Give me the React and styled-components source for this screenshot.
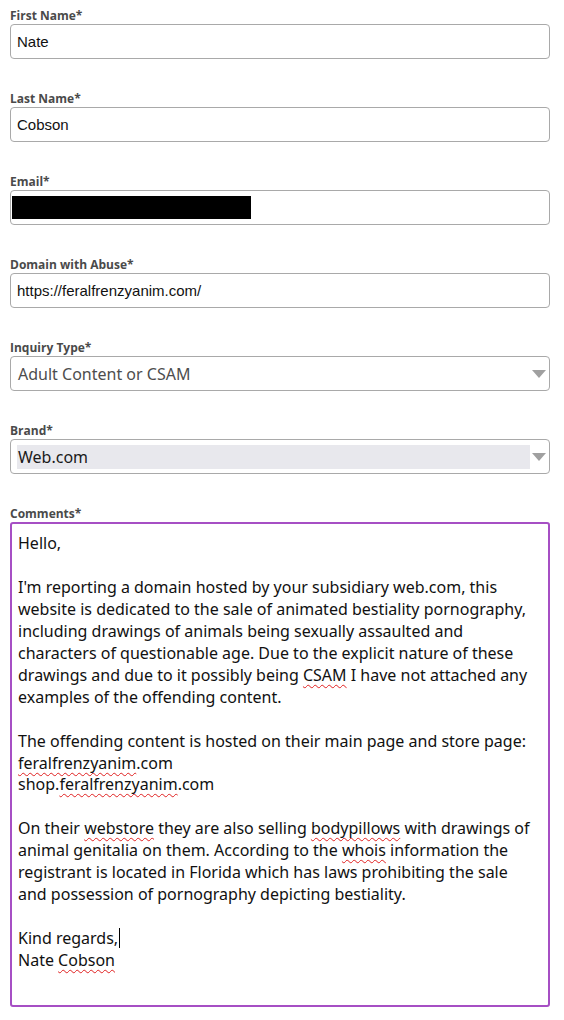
import React from "react";
import styled, { createGlobalStyle } from "styled-components";

const GlobalStyle = createGlobalStyle`
  html, body {
    margin: 0;
    padding: 0;
    background: #fff;
  }
`;

const Form = styled.form`
  padding: 7px 14px 0 10px;
  display: flex;
  flex-direction: column;
  gap: 31px;
  font-family: "Open Sans", "Noto Sans", sans-serif;
`;

const Field = styled.div`
  display: flex;
  flex-direction: column;
`;

const Label = styled.label`
  display: block;
  font-size: 12px;
  font-weight: 700;
  line-height: 16px;
  padding-top: 1px;
  color: #4a4a4a;
`;

const TextBox = styled.div`
  box-sizing: border-box;
  height: 35px;
  border: 1px solid #a9a9a9;
  border-radius: 4px;
  display: flex;
  align-items: center;
  padding: 0 6px;
  font-family: "Liberation Sans", Arial, sans-serif;
  font-size: 15px;
  color: #111;
`;

const Redacted = styled.span`
  display: block;
  width: 239px;
  height: 23px;
  margin-left: -5px;
  background: #000;
`;

const SelectBox = styled.div`
  box-sizing: border-box;
  height: 35px;
  border: 1px solid #a9a9a9;
  border-radius: 4px;
  display: flex;
  align-items: center;
  padding: 0 3px 0 6px;
  gap: 2px;
`;

const SelectValue = styled.span`
  flex: 1;
  display: flex;
  align-items: center;
  height: 24px;
  padding-left: 1px;
  font-family: "Noto Sans", "Open Sans", sans-serif;
  font-size: 16px;
  color: ${(p) => (p.$selected ? "#1a1a1a" : "#4d4d4d")};
  background: ${(p) => (p.$selected ? "#e8e8ed" : "transparent")};
`;

const Arrow = styled.span`
  width: 0;
  height: 0;
  border-left: 7.5px solid transparent;
  border-right: 7.5px solid transparent;
  border-top: 8px solid #a0a0a0;
  margin-top: 1px;
`;

const Comments = styled.div`
  box-sizing: border-box;
  height: 485px;
  border: 2px solid #a64fc4;
  border-radius: 3px;
  padding: 9px 6px 0 6px;
  font-family: "Noto Sans", "Open Sans", sans-serif;
  font-size: 16px;
  line-height: 21.95px;
  color: #111;
`;

const Line = styled.div`
  min-height: 21.95px;
  white-space: pre;
`;

const Typo = styled.span`
  text-decoration: underline wavy #e02020;
  text-decoration-thickness: 1px;
  text-underline-offset: 3px;
  text-decoration-skip-ink: none;
`;

const Caret = styled.span`
  display: inline-block;
  width: 1px;
  height: 20px;
  background: #000;
  vertical-align: -4px;
  margin-left: 1px;
`;

export default function App() {
  return (
    <>
      <GlobalStyle />
      <Form>
        <Field>
          <Label>First Name*</Label>
          <TextBox>Nate</TextBox>
        </Field>
        <Field>
          <Label>Last Name*</Label>
          <TextBox>Cobson</TextBox>
        </Field>
        <Field>
          <Label>Email*</Label>
          <TextBox>
            <Redacted />
          </TextBox>
        </Field>
        <Field>
          <Label>Domain with Abuse*</Label>
          <TextBox>https://feralfrenzyanim.com/</TextBox>
        </Field>
        <Field>
          <Label>Inquiry Type*</Label>
          <SelectBox>
            <SelectValue>Adult Content or CSAM</SelectValue>
            <Arrow />
          </SelectBox>
        </Field>
        <Field>
          <Label>Brand*</Label>
          <SelectBox>
            <SelectValue $selected>Web.com</SelectValue>
            <Arrow />
          </SelectBox>
        </Field>
        <Field>
          <Label>Comments*</Label>
          <Comments>
            <Line>Hello,</Line>
            <Line />
            <Line>I'm reporting a domain hosted by your subsidiary web.com, this</Line>
            <Line>website is dedicated to the sale of animated bestiality pornography,</Line>
            <Line>including drawings of animals being sexually assaulted and</Line>
            <Line>characters of questionable age. Due to the explicit nature of these</Line>
            <Line>
              drawings and due to it possibly being <Typo>CSAM</Typo> I have not attached any
            </Line>
            <Line>examples of the offending content.</Line>
            <Line />
            <Line>The offending content is hosted on their main page and store page:</Line>
            <Line>
              <Typo>feralfrenzyanim</Typo>.com
            </Line>
            <Line>
              shop.<Typo>feralfrenzyanim</Typo>.com
            </Line>
            <Line />
            <Line>
              On their <Typo>webstore</Typo> they are also selling <Typo>bodypillows</Typo> with drawings of
            </Line>
            <Line>
              animal genitalia on them. According to the <Typo>whois</Typo> information the
            </Line>
            <Line>registrant is located in Florida which has laws prohibiting the sale</Line>
            <Line>and possession of pornography depicting bestiality.</Line>
            <Line />
            <Line>
              Kind regards,<Caret />
            </Line>
            <Line>
              Nate <Typo>Cobson</Typo>
            </Line>
          </Comments>
        </Field>
      </Form>
    </>
  );
}
